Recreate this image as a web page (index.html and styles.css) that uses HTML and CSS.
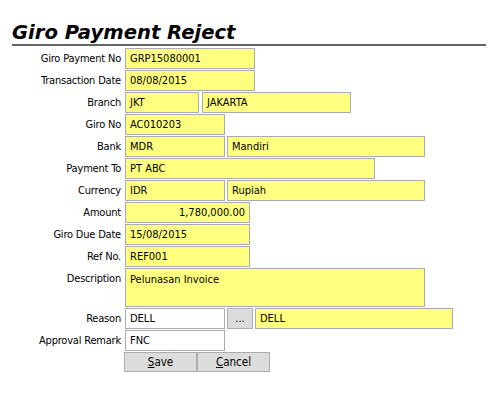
FILE: index.html
```html
<!DOCTYPE html>
<html>
<head>
<meta charset="utf-8">
<link rel="stylesheet" href="styles.css">
</head>
<body>
<div class="page">
  <h1 class="title">Giro Payment Reject</h1>
  <div class="form">
    <div class="lbl">Giro Payment No</div>
    <div class="ctl"><span class="fld w130">GRP15080001</span></div>

    <div class="lbl">Transaction Date</div>
    <div class="ctl"><span class="fld w130">08/08/2015</span></div>

    <div class="lbl">Branch</div>
    <div class="ctl gap3"><span class="fld w74">JKT</span><span class="fld w149">JAKARTA</span></div>

    <div class="lbl">Giro No</div>
    <div class="ctl"><span class="fld w100">AC010203</span></div>

    <div class="lbl">Bank</div>
    <div class="ctl"><span class="fld w100">MDR</span><span class="fld w198">Mandiri</span></div>

    <div class="lbl">Payment To</div>
    <div class="ctl"><span class="fld w250">PT ABC</span></div>

    <div class="lbl">Currency</div>
    <div class="ctl"><span class="fld w100">IDR</span><span class="fld w198">Rupiah</span></div>

    <div class="lbl">Amount</div>
    <div class="ctl"><span class="fld w125 num">1,780,000.00</span></div>

    <div class="lbl">Giro Due Date</div>
    <div class="ctl"><span class="fld w125">15/08/2015</span></div>

    <div class="lbl">Ref No.</div>
    <div class="ctl"><span class="fld w125">REF001</span></div>

    <div class="lbl">Description</div>
    <div class="ctl tall"><span class="fld w300 area">Pelunasan Invoice</span></div>

    <div class="lbl">Reason</div>
    <div class="ctl"><span class="fld w100 white">DELL</span><span class="btn dots">...</span><span class="fld w198">DELL</span></div>

    <div class="lbl">Approval Remark</div>
    <div class="ctl"><span class="fld w100 white">FNC</span></div>

    <div class="lbl"></div>
    <div class="ctl actions"><span class="btn act"><u>S</u>ave</span><span class="btn act"><u>C</u>ancel</span></div>
  </div>
</div>
</body>
</html>
```

FILE: styles.css
```css
html, body {
  margin: 0;
  padding: 0;
  background: #fff;
}

body {
  font-family: "DejaVu Sans Condensed", "DejaVu Sans", sans-serif;
  font-stretch: condensed;
  font-size: 11px;
  color: #000;
}

.page {
  padding-left: 12px;
  width: 474px;
}

.title {
  margin: 0;
  padding-top: 22px;
  padding-bottom: 0;
  line-height: 22px;
  font-family: "DejaVu Sans", sans-serif;
  font-stretch: normal;
  font-size: 19.6px;
  font-weight: bold;
  font-style: italic;
  color: #000;
  border-bottom: 2px solid #666;
}

.form {
  display: grid;
  grid-template-columns: 109px auto;
  column-gap: 4px;
  margin-top: 2px;
}

.lbl {
  text-align: right;
  line-height: 22px;
  height: 22px;
  white-space: nowrap;
  letter-spacing: -0.2px;
}

.ctl {
  display: flex;
  gap: 2px;
  height: 22px;
}

.ctl.gap3 {
  gap: 3px;
}

.ctl.tall {
  height: 40px;
}

.fld {
  box-sizing: border-box;
  display: block;
  height: 21px;
  line-height: 19px;
  padding: 0 4px;
  background: #ffff80;
  border: 1px solid #a8abb2;
  white-space: nowrap;
  overflow: hidden;
}

.fld.white {
  background: #fff;
}

.fld.num {
  text-align: right;
}

.fld.area {
  height: 39px;
  line-height: 17px;
  padding-top: 2px;
}

.w74 { width: 74px; }
.w100 { width: 100px; }
.w125 { width: 125px; }
.w130 { width: 130px; }
.w149 { width: 149px; }
.w198 { width: 198px; }
.w250 { width: 250px; }
.w300 { width: 300px; }

.btn {
  box-sizing: border-box;
  display: block;
  height: 21px;
  line-height: 19px;
  text-align: center;
  background: #dcdcdc;
  border: 1px solid #adadad;
}

.btn.dots {
  width: 26px;
}

.actions {
  gap: 0;
  margin-left: -1px;
}

.btn.act {
  width: 73px;
  height: 20px;
  line-height: 18px;
  font-size: 11.5px;
}

u {
  text-decoration: underline;
  text-underline-offset: 1px;
}
```
